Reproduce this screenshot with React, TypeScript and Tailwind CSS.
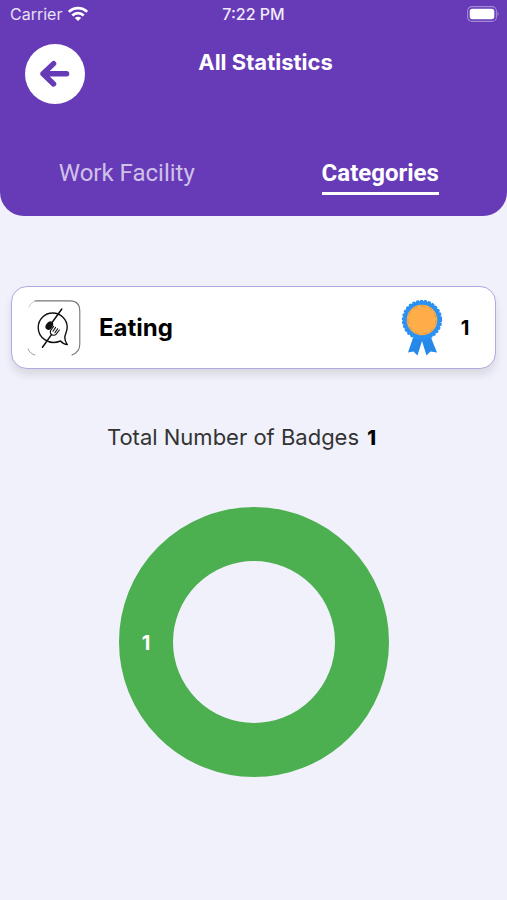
import { useState } from "react";

const tabs = ["Work Facility", "Categories"];

const categories = [{ name: "Eating", badges: 1 }];

function WifiIcon() {
  return (
    <svg className="h-4 w-5" viewBox="0 0 20 16" fill="none" stroke="#fff" strokeWidth="2.8">
      <path d="M.8 5.8C6 .8 14 .8 19.2 5.8" />
      <path d="M4.3 9.5C7.6 6.4 12.4 6.4 15.7 9.5" />
      <path d="M10 15 6.8 12C8.6 10.4 11.4 10.4 13.2 12Z" fill="#fff" stroke="none" />
    </svg>
  );
}

function BatteryIcon() {
  return (
    <svg className="h-4 w-8" viewBox="0 0 32 16" fill="none">
      <rect x="0.6" y="0.6" width="28.8" height="14.8" rx="4.5" stroke="#fff" strokeOpacity="0.4" strokeWidth="1.1" />
      <rect x="2.7" y="2.8" width="24.6" height="10.4" rx="2.6" fill="#fff" />
      <path d="M30.6 5.8C32 6.4 32 9.6 30.6 10.2Z" fill="#fff" fillOpacity="0.4" />
    </svg>
  );
}

function ArrowIcon() {
  return (
    <svg className="h-8 w-8" viewBox="0 0 32 32" fill="none" stroke="#673ab7" strokeWidth="5.4" strokeLinecap="round" strokeLinejoin="round">
      <path d="M27.6 15.8H4M14.6 5.6 4 15.8 14.6 26" />
    </svg>
  );
}

function EatingIcon() {
  return (
    <svg className="h-14 w-[54px]" viewBox="0 0 54 56" fill="none" stroke="#111" strokeLinecap="round" strokeLinejoin="round">
      {/* frame, with its left and bottom sides left open */}
      <path d="M8 .9H43Q52.8 .9 52.8 11V44Q52.8 52 45 55" stroke="#777" strokeWidth="1.1" />
      <path d="M2 7Q4 2 9 .9" stroke="#bbb" strokeWidth="0.8" />
      <path d="M1.2 49Q3 54 8 55" stroke="#888" strokeWidth="0.8" />
      {/* speech bubble */}
      <path d="M33.5 41C22 45.7 11.2 37.9 11.2 27.5 11.2 19.3 17.7 13 25.7 13 33.7 13 40.2 19.3 40.2 27.3 40.2 31.5 37.8 34.8 37.8 37.4 37.8 40 38.8 42.5 40.3 44.6 37.5 44.6 35.3 43 33.5 41" strokeWidth="1.4" />
      {/* spoon */}
      <path d="M34.8 9 24 24" strokeWidth="1.5" />
      <ellipse cx="22.3" cy="25.6" rx="3.3" ry="4.6" transform="rotate(35 22.3 25.6)" fill="#111" stroke="none" />
      {/* fork */}
      <path d="M15.5 47.3 24.5 34.6" strokeWidth="1.5" />
      <path d="M26.6 26.4 23.5 30.6Q22.7 33.4 24.9 34.8 27.4 36 29.2 34.2L32.4 30M28.6 27.4 26 31.2M30.6 28.8 28 32.6" strokeWidth="1.1" />
    </svg>
  );
}

function BadgeIcon() {
  return (
    <svg className="h-14 w-[42px]" viewBox="0 0 42 56" fill="none">
      <path d="M13 35 7 52.5 12.5 51.5 16.5 55.5 21 41 25.5 55.5 29.5 51.5 36 52.5 29 35Z" fill="#2589ea" />
      <circle cx="21" cy="20" r="19" fill="#2b92f3" />
      <circle cx="21" cy="20" r="19" stroke="#2b92f3" strokeWidth="2.4" strokeLinecap="round" strokeDasharray="1 3" />
      <circle cx="21" cy="20" r="15.3" fill="#ffad49" />
      <circle cx="21" cy="20" r="14" stroke="#c98d48" strokeWidth="0.6" strokeDasharray="5 3" />
    </svg>
  );
}

function DonutChart({ value }: { value: number }) {
  return (
    <svg className="h-[270px] w-[270px]" viewBox="0 0 270 270" role="img" aria-label="Badges by category">
      <circle cx="135" cy="135" r="108" fill="none" stroke="#4caf50" strokeWidth="54" />
      <text x="27" y="143" textAnchor="middle" fill="#fff" className="font-[Inter] text-xl font-bold">
        {value}
      </text>
    </svg>
  );
}

export default function App() {
  const [active, setActive] = useState("Categories");
  const total = categories.reduce((sum, c) => sum + c.badges, 0);

  return (
    <div className="min-h-screen bg-[#f0f1fa] font-[Inter,sans-serif] text-black">
      <header className="rounded-b-3xl bg-[#673ab7] pb-[21px] text-white">
        <div className="grid grid-cols-3 items-center px-2 pt-0.5 text-base leading-6">
          <div className="flex items-center gap-1.5 pl-0.5 text-white/85">
            <span>Carrier</span>
            <WifiIcon />
          </div>
          <span className="text-center font-medium text-white/90">7:22 PM</span>
          <div className="flex justify-end">
            <BatteryIcon />
          </div>
        </div>

        <div className="mt-[18px] flex items-start px-[25px]">
          <button type="button" aria-label="Back" className="flex size-[60px] items-center justify-center rounded-full bg-white">
            <ArrowIcon />
          </button>
          <h1 className="flex-1 pt-1 pr-9 text-center text-[22px] leading-7 font-bold">All Statistics</h1>
        </div>

        <nav className="mt-[52px] grid grid-cols-2 justify-items-center font-[Roboto,sans-serif] text-2xl leading-[34px]">
          {tabs.map((tab) => (
            <button
              key={tab}
              type="button"
              onClick={() => setActive(tab)}
              className={
                tab === active
                  ? "border-b-3 border-white pb-0.5 font-bold text-white"
                  : "border-b-3 border-transparent pb-0.5 text-white/70"
              }
            >
              {tab}
            </button>
          ))}
        </nav>
      </header>

      <main className="px-[11px] pt-[70px]">
        {categories.map((c) => (
          <div
            key={c.name}
            className="flex h-[83px] items-center rounded-2xl border border-[#b3a8e0] bg-white pr-2 pl-[15px] text-xl font-bold shadow-[0_6px_8px_rgba(0,0,0,0.1)]"
          >
            <EatingIcon />
            <span className="ml-[18px] flex-1 text-2xl">{c.name}</span>
            <BadgeIcon />
            <span className="w-11 text-center">{c.badges}</span>
          </div>
        ))}

        <p className="mt-[52px] pr-6 text-center text-[22px] leading-8 text-[#333]">
          Total Number of Badges <strong className="ml-0.5 text-xl font-extrabold text-black">{total}</strong>
        </p>

        <div className="mt-[54px] flex justify-center">
          <DonutChart value={total} />
        </div>
      </main>
    </div>
  );
}
